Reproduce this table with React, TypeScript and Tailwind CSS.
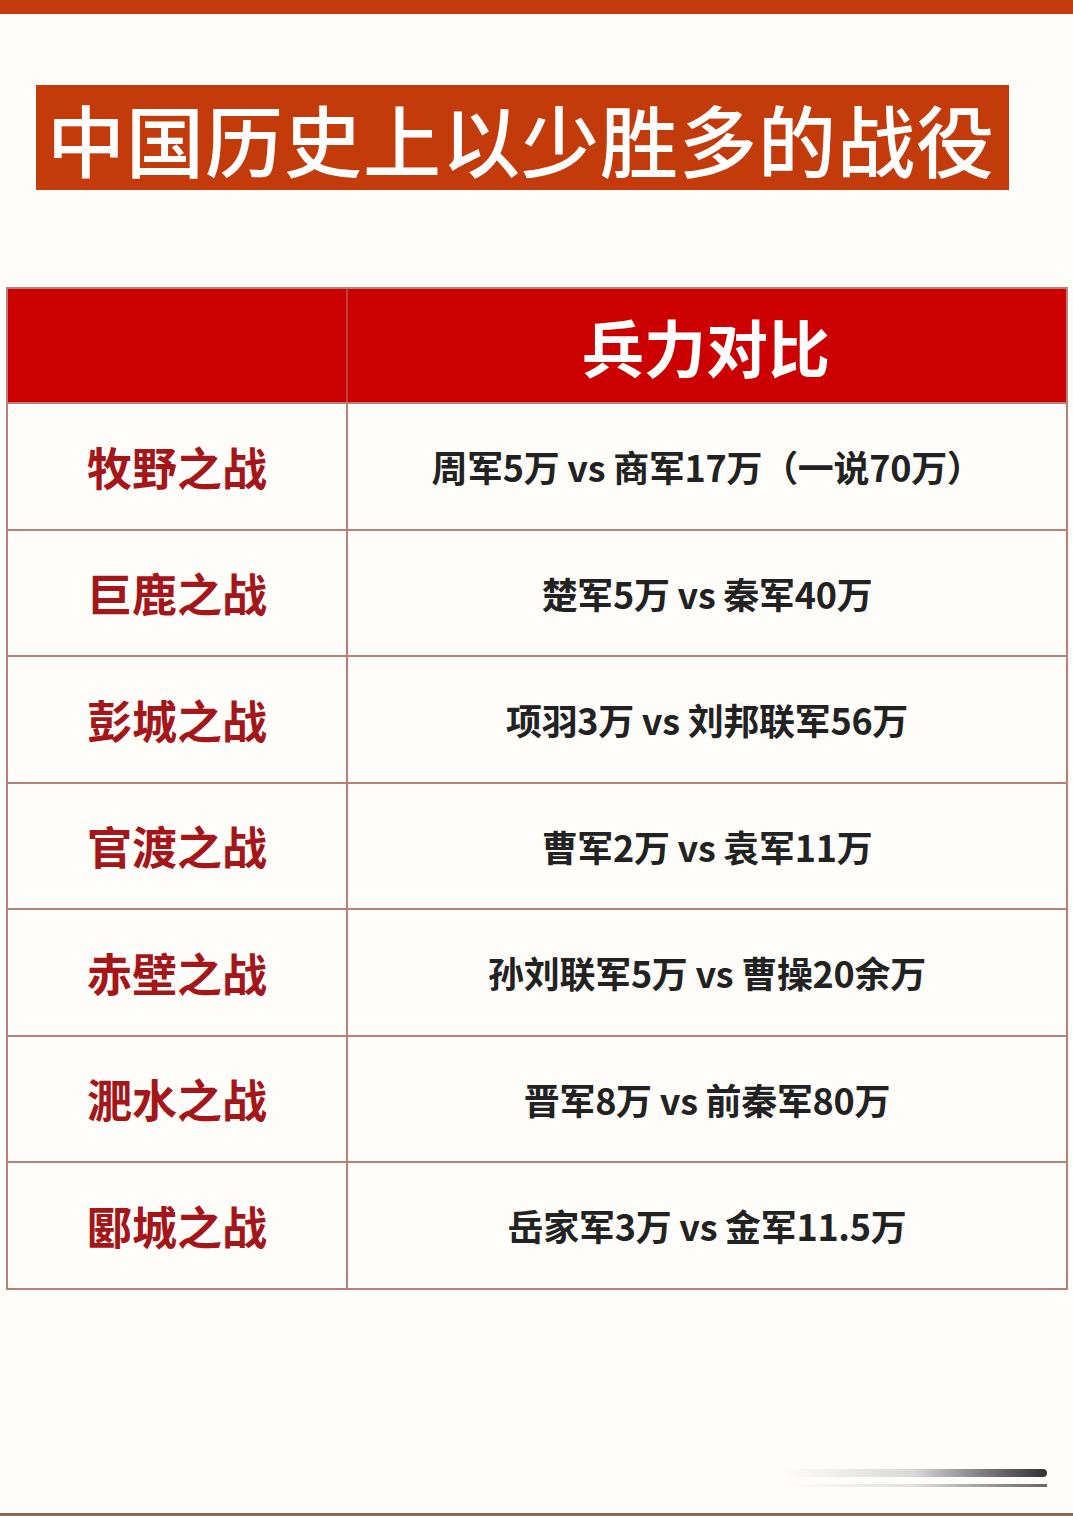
import React from "react";

const rows: [string, string][] = [
  ["牧野之战", "周军5万 vs 商军17万（一说70万）"],
  ["巨鹿之战", "楚军5万 vs 秦军40万"],
  ["彭城之战", "项羽3万 vs 刘邦联军56万"],
  ["官渡之战", "曹军2万 vs 袁军11万"],
  ["赤壁之战", "孙刘联军5万 vs 曹操20余万"],
  ["淝水之战", "晋军8万 vs 前秦军80万"],
  ["郾城之战", "岳家军3万 vs 金军11.5万"],
];

const font = { fontFamily: '"Noto Sans CJK SC", "Noto Sans", sans-serif' };

export default function App() {
  return (
    <div className="w-[1073px] h-[1516px] bg-[#fffdf9] flex flex-col" style={font}>
      <div className="h-[14px] bg-[#c53a0a]" />
      <div className="h-[71px]" />
      <div className="ml-[36px] w-[973px] h-[105px] bg-[#c33b0b] flex items-center pl-[11px]">
        <span className="text-white text-[78px] leading-none font-medium tracking-[1px]">
          中国历史上以少胜多的战役
        </span>
      </div>
      <div className="h-[97px]" />
      <div className="mx-[6px] w-[1062px] border-[2px] border-[#b78078] grid grid-cols-[340px_1fr]">
        <div className="h-[113px] bg-[#cc0000] border-r-[2px] border-[#b84040]" />
        <div className="h-[113px] bg-[#cc0000] flex items-center justify-center">
          <span className="text-white text-[62px] leading-none font-bold pr-[2px]">兵力对比</span>
        </div>
        {rows.map(([a, b], i) => (
          <React.Fragment key={i}>
            <div className="h-[126.5px] border-t-[2px] border-r-[2px] border-[#b78078] flex items-center justify-center">
              <span className="text-[#a3171b] text-[45px] leading-none font-bold">{a}</span>
            </div>
            <div className="h-[126.5px] border-t-[2px] border-[#b78078] flex items-center justify-center">
              <span className="text-[#222222] text-[36px] leading-none font-bold tracking-[-0.3px]">{b}</span>
            </div>
          </React.Fragment>
        ))}
      </div>
      <div className="flex-1 flex flex-col items-end pr-[26px] justify-end pb-[26px]">
        <div className="w-[265px] h-[8px] bg-gradient-to-r from-transparent via-[#d8d8d8] to-[#333333] rounded-r-full" />
        <div className="w-[265px] h-[3px] mt-[7px] bg-gradient-to-r from-transparent via-[#e0e0e0] to-[#666666]" />
      </div>
      <div className="h-[3px] bg-[#8a6a50]" />
    </div>
  );
}
